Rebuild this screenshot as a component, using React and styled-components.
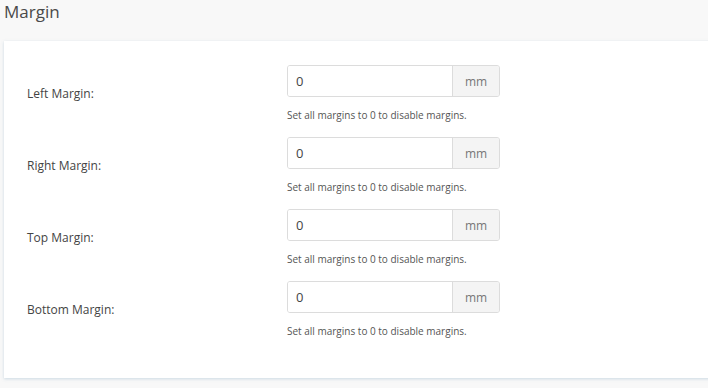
import React from 'react'
import styled, { createGlobalStyle } from 'styled-components'

const GlobalStyle = createGlobalStyle`
  html, body {
    margin: 0;
    padding: 0;
    background: #f8f8f8;
    font-family: "Open Sans", "Noto Sans", sans-serif;
    color: #444;
  }
`

const fields = [
  { id: 'left', label: 'Left Margin:' },
  { id: 'right', label: 'Right Margin:' },
  { id: 'top', label: 'Top Margin:' },
  { id: 'bottom', label: 'Bottom Margin:' },
]

const App = () => {
  return (
    <>
      <GlobalStyle />
      <Page>
        <Title>Margin</Title>
        <Card>
          {fields.map((field) => (
            <Row key={field.id}>
              <Label htmlFor={field.id}>{field.label}</Label>
              <Control>
                <InputGroup>
                  <Input id={field.id} defaultValue="0" />
                  <Addon>mm</Addon>
                </InputGroup>
                <Help>Set all margins to 0 to disable margins.</Help>
              </Control>
            </Row>
          ))}
        </Card>
      </Page>
    </>
  )
}

const Page = styled.div`
  width: 708px;
  height: 388px;
  overflow: hidden;
  padding: 0 0 0 4px;
  box-sizing: border-box;
`

const Title = styled.h2`
  margin: 0;
  padding-top: 1px;
  height: 40px;
  font-size: 17px;
  font-weight: 400;
  line-height: 22px;
  color: #4a4a4a;
`

const Card = styled.div`
  width: 720px;
  height: 337px;
  box-sizing: border-box;
  background: #fff;
  box-shadow: 0 1px 3px rgba(120, 160, 190, 0.35);
  padding: 24px 0 0 0;
  display: flex;
  flex-direction: column;
  gap: 12px;
`

const Row = styled.div`
  display: grid;
  grid-template-columns: 283px 213px;
  align-items: center;
  height: 60px;
`

const Label = styled.label`
  padding-left: 23px;
  margin-top: -3px;
  font-size: 12px;
  color: #444;
`

const Control = styled.div`
  display: flex;
  flex-direction: column;
  align-self: start;
`

const InputGroup = styled.div`
  display: flex;
  height: 32px;
  border: 1px solid #dcdcdc;
  border-radius: 3px;
  box-sizing: border-box;
  overflow: hidden;
`

const Input = styled.input`
  flex: 1;
  min-width: 0;
  border: none;
  outline: none;
  padding: 0 8px;
  font-family: inherit;
  font-size: 13px;
  color: #444;
`

const Addon = styled.span`
  width: 46px;
  display: flex;
  align-items: center;
  justify-content: center;
  background: #f4f4f4;
  border-left: 1px solid #dcdcdc;
  font-size: 12px;
  color: #777;
`

const Help = styled.div`
  margin-top: 11px;
  font-size: 10px;
  color: #555;
`

export default App
